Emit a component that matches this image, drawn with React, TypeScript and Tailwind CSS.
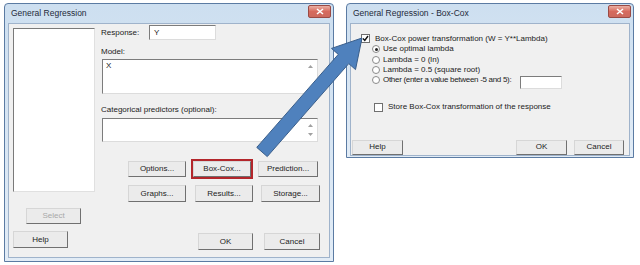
import React from 'react';

const font = "font-['Liberation_Sans',Arial,sans-serif]";

const Btn: React.FC<{ label: string; w: string; h?: string; disabled?: boolean; className?: string }> = ({
  label,
  w,
  h = 'h-[17px]',
  disabled,
  className = '',
}) => (
  <div
    className={`${w} ${h} flex items-center justify-center bg-[#ebebeb] border border-t-[#d6d6d6] border-l-[#d6d6d6] border-r-[#707070] border-b-[#707070] text-[8px] ${
      disabled ? 'text-[#a8a8a8]' : 'text-[#222]'
    } ${className}`}
  >
    {label}
  </div>
);

const Close: React.FC = () => (
  <div className="w-[23px] h-[13px] mt-[1px] rounded-[2px] border border-[#9a4a44] bg-gradient-to-b from-[#eab0a4] via-[#d66a5e] to-[#cc6a5e] flex items-center justify-center">
    <svg width="8" height="7" viewBox="0 0 8 7">
      <path d="M1 1 L7 6 M7 1 L1 6" stroke="#fff" strokeWidth="1.6" />
    </svg>
  </div>
);

const Sunken: React.FC<{ className?: string; children?: React.ReactNode }> = ({ className = '', children }) => (
  <div
    className={`bg-white border border-t-[#7c7c7c] border-l-[#7c7c7c] border-r-[#dcdcdc] border-b-[#dcdcdc] ${className}`}
  >
    {children}
  </div>
);

const Up = () => (
  <svg width="5" height="3" viewBox="0 0 5 3">
    <path d="M0 3 L2.5 0 L5 3 Z" fill="#a0a0a0" />
  </svg>
);
const Down = () => (
  <svg width="5" height="3" viewBox="0 0 5 3">
    <path d="M0 0 L2.5 3 L5 0 Z" fill="#a0a0a0" />
  </svg>
);

const Radio: React.FC<{ on?: boolean }> = ({ on }) => (
  <div className="w-[8px] h-[8px] shrink-0 rounded-full border border-[#8a8a8a] bg-white flex items-center justify-center">
    {on && <div className="w-[3px] h-[3px] rounded-full bg-[#222]" />}
  </div>
);

const Check: React.FC<{ on?: boolean }> = ({ on }) => (
  <div className="w-[9px] h-[9px] shrink-0 border border-[#6f6f6f] bg-white flex items-center justify-center">
    {on && (
      <svg width="7" height="7" viewBox="0 0 7 7">
        <path d="M1 3.5 L2.8 5.5 L6 1" stroke="#111" strokeWidth="1.4" fill="none" />
      </svg>
    )}
  </div>
);

export default function App() {
  return (
    <div className={`relative w-[640px] h-[265px] bg-white overflow-hidden flex items-start pl-[4px] pt-[3px] ${font}`}>
      {/* General Regression */}
      <div className="w-[330px] h-[259px] flex flex-col rounded-t-[4px] border border-[#5b7ba3] bg-gradient-to-b from-[#cddff0] to-[#e2ecf6]">
        <div className="h-[19px] flex justify-between pl-[6px] pr-[2px]">
          <span className="text-[8.5px] text-[#1e2a3a] leading-[19px]">General Regression</span>
          <Close />
        </div>
        <div className="flex-1 mx-[3px] mb-[3px] bg-[#f0f0f0] border border-[#9fb3cb] flex text-[8px] text-[#222]">
          <div className="flex flex-col pl-[4px] pt-[4px]">
            <div className="w-[82px] h-[164px] bg-white border border-t-[#7a7a7a] border-l-[#7a7a7a] border-r-[#e0e0e0] border-b-[#e0e0e0]" />
            <Btn label="Select" w="w-[55px]" h="h-[16px]" disabled className="mt-[16px] ml-[13px]" />
            <Btn label="Help" w="w-[55px]" className="mt-[7px]" />
          </div>
          <div className="flex flex-col ml-[6px] pt-[1px]">
            <div className="flex items-center h-[15px]">
              <span className="w-[48px]">Response:</span>
              <Sunken className="w-[67px] h-[15px] pl-[4px] leading-[13px]">Y</Sunken>
            </div>
            <div className="mt-[7px] h-[10px] leading-[10px]">Model:</div>
            <Sunken className="mt-[2px] ml-[1px] w-[216px] h-[35px] flex">
              <div className="flex-1 pl-[3px] pt-[1px] leading-[10px]">X</div>
              <div className="w-[13px] flex flex-col items-center pt-[5px]">
                <Up />
              </div>
            </Sunken>
            <div className="mt-[11px] h-[10px] leading-[10px]">Categorical predictors (optional):</div>
            <Sunken className="mt-[3px] ml-[1px] w-[216px] h-[24px] flex justify-end">
              <div className="w-[13px] flex flex-col items-center justify-between py-[5px]">
                <Up />
                <Down />
              </div>
            </Sunken>
            <div className="flex mt-[17px] ml-[27px] items-center">
              <Btn label="Options..." w="w-[58px]" h="h-[16px]" />
              <div className="ml-[5px] p-[1px] border border-[#b3262b] bg-[#b3262b]">
                <Btn label="Box-Cox..." w="w-[58px]" h="h-[16px]" className="border-[#ebebeb]" />
              </div>
              <Btn label="Prediction..." w="w-[60px]" h="h-[16px]" className="ml-[5px]" />
            </div>
            <div className="flex mt-[6px] ml-[27px]">
              <Btn label="Graphs..." w="w-[58px]" />
              <Btn label="Results..." w="w-[58px]" className="ml-[9px]" />
              <Btn label="Storage..." w="w-[59px]" className="ml-[8px]" />
            </div>
            <div className="flex mt-[31px] ml-[97px]">
              <Btn label="OK" w="w-[55px]" />
              <Btn label="Cancel" w="w-[56px]" className="ml-[11px]" />
            </div>
          </div>
        </div>
      </div>

      {/* General Regression - Box-Cox */}
      <div className="ml-[12px] w-[288px] h-[155px] flex flex-col rounded-t-[4px] border border-[#5b7ba3] bg-gradient-to-b from-[#cddff0] to-[#e2ecf6]">
        <div className="h-[19px] flex justify-between pl-[6px] pr-[2px]">
          <span className="text-[8.5px] text-[#1e2a3a] leading-[19px]">General Regression - Box-Cox</span>
          <Close />
        </div>
        <div className="flex-1 mx-[3px] mb-[3px] bg-[#f0f0f0] border border-[#9fb3cb] flex flex-col text-[8px] text-[#222]">
          <div className="flex items-center mt-[10px] ml-[10px] h-[9px]">
            <Check on />
            <span className="ml-[5px] whitespace-nowrap">Box-Cox power transformation (W = Y**Lambda)</span>
          </div>
          <div className="flex flex-col ml-[21px] mt-[1px]">
            {['Use optimal lambda', 'Lambda = 0 (ln)', 'Lambda = 0.5 (square root)'].map((t, i) => (
              <div key={t} className="flex items-center h-[10.4px]">
                <Radio on={i === 0} />
                <span className="ml-[3px] whitespace-nowrap">{t}</span>
              </div>
            ))}
            <div className="flex items-center h-[10.4px]">
              <Radio />
              <span className="ml-[3px] w-[137px] whitespace-nowrap tracking-[-0.3px]">
                Other (enter a value between -5 and 5):
              </span>
              <Sunken className="w-[42px] h-[13px] mt-[4px] shrink-0" />
            </div>
          </div>
          <div className="flex items-center mt-[17px] ml-[23px] h-[9px]">
            <Check />
            <span className="ml-[5px] whitespace-nowrap">Store Box-Cox transformation of the response</span>
          </div>
          <div className="flex mt-[28px] ml-[1px]">
            <Btn label="Help" w="w-[51px]" h="h-[15px]" />
            <Btn label="OK" w="w-[51px]" h="h-[15px]" className="ml-[113px]" />
            <Btn label="Cancel" w="w-[50px]" h="h-[15px]" className="ml-[7px]" />
          </div>
        </div>
      </div>

      {/* callout arrow */}
      <svg className="absolute left-0 top-0 pointer-events-none" width="640" height="265" viewBox="0 0 640 265">
        <polygon
          points="362,38 355.5,69.6 348.75,63.6 267.25,156.6 256.75,147.4 338.25,54.4 331.5,48.4"
          fill="#4f81bd"
          stroke="#385d8a"
          strokeWidth="1"
          strokeLinejoin="miter"
        />
      </svg>
    </div>
  );
}
